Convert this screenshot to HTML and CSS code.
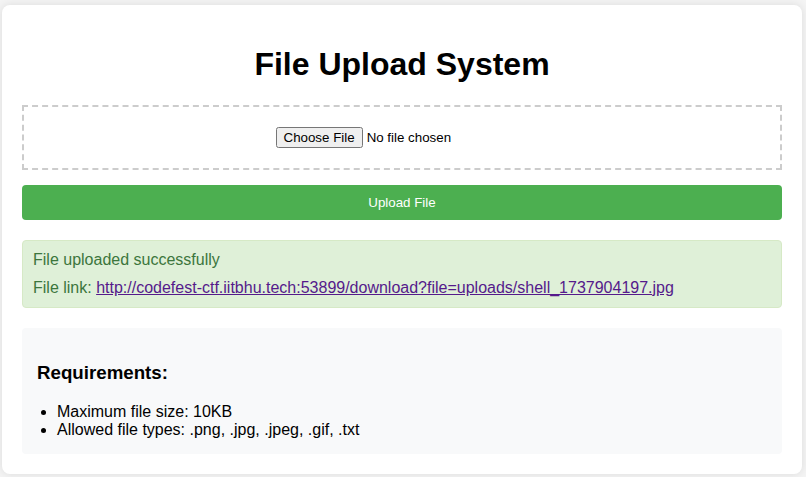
FILE: index.html
```html
<!DOCTYPE html>
<html>
<head>
<meta charset="utf-8">
<title>File Upload System</title>
<link rel="stylesheet" href="styles.css">
</head>
<body>
<div class="container">
  <h1 class="title">File Upload System</h1>
  <form class="upload-form">
    <div class="drop-zone">
      <input type="file" name="file">
    </div>
    <button type="button" class="upload-btn">Upload File</button>
  </form>
  <div class="message success">
    <p class="msg-line">File uploaded successfully</p>
    <p class="msg-line">File link: <a class="file-link" href="#">http://codefest-ctf.iitbhu.tech:53899/download?file=uploads/shell_1737904197.jpg</a></p>
  </div>
  <div class="requirements">
    <h3 class="req-title">Requirements:</h3>
    <ul class="req-list">
      <li>Maximum file size: 10KB</li>
      <li>Allowed file types: .png, .jpg, .jpeg, .gif, .txt</li>
    </ul>
  </div>
</div>
</body>
</html>
```

FILE: styles.css
```css
html, body {
  margin: 0;
  padding: 0;
}
body {
  background: #f4f4f4;
  font-family: "Liberation Sans", Arial, sans-serif;
  padding: 5px 2px;
}
.container {
  width: 800px;
  box-sizing: border-box;
  background: #fff;
  border-radius: 8px;
  box-shadow: 0 0 10px rgba(0, 0, 0, 0.1);
  padding: 20px;
}
.title {
  text-align: center;
  font-size: 32px;
  margin: 21px 0 22px;
  line-height: 37px;
}
.upload-form {
  margin: 0;
}
.drop-zone {
  border: 2px dashed #ccc;
  padding: 20px;
  text-align: center;
  margin-bottom: 15px;
}
.drop-zone input {
  font-family: "Liberation Sans", Arial, sans-serif;
  font-size: 13.33px;
}
.upload-btn {
  display: block;
  width: 100%;
  background: #4caf50;
  color: #fff;
  border: none;
  border-radius: 4px;
  padding: 10px;
  font-family: "Liberation Sans", Arial, sans-serif;
  font-size: 13.33px;
  line-height: 15px;
}
.message {
  margin-top: 20px;
  padding: 10px;
  border-radius: 4px;
}
.success {
  background: #dff0d8;
  border: 1px solid #d6e9c6;
  color: #3c763d;
}
.msg-line {
  margin: 0;
  line-height: 18px;
}
.msg-line + .msg-line {
  margin-top: 10px;
}
.file-link {
  color: #551a8b;
}
.requirements {
  margin-top: 20px;
  background: #f8f9fa;
  padding: 15px;
  border-radius: 4px;
}
.req-title {
  font-size: 18.72px;
  margin: 19px 0;
  line-height: 22px;
}
.req-list {
  margin: 16px 0 0;
  padding-left: 20px;
  line-height: 18px;
}
```
